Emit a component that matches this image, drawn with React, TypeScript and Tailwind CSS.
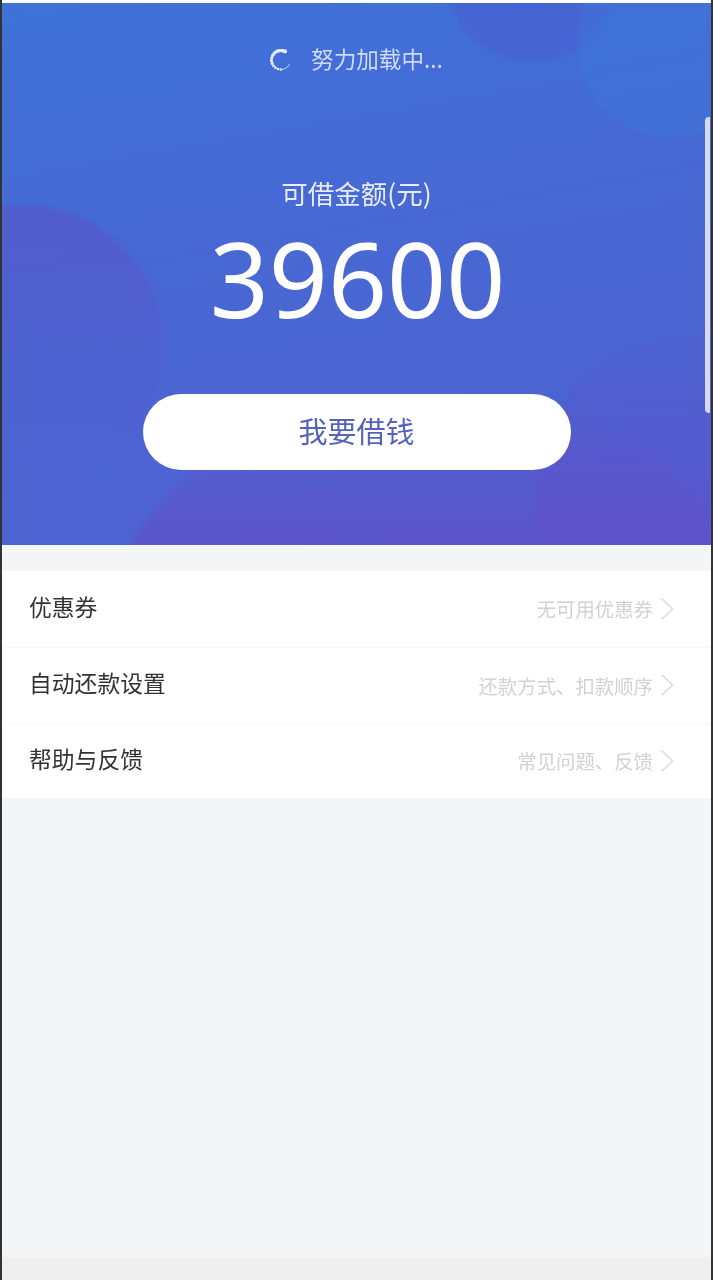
const rows = [
  { title: '优惠券', hint: '无可用优惠券' },
  { title: '自动还款设置', hint: '还款方式、扣款顺序' },
  { title: '帮助与反馈', hint: '常见问题、反馈' },
];

const cjk = "font-['Noto_Sans_CJK_SC',sans-serif]";

function Spinner() {
  // dotted arc from one o'clock round the left to the bottom
  const dots = Array.from({ length: 13 }, (_, i) => {
    const angle = ((-65 - i * 17) * Math.PI) / 180;
    return { x: 11 + 9.5 * Math.cos(angle), y: 11 + 9.5 * Math.sin(angle), r: 2.1 - i * 0.07 };
  });
  return (
    <svg width="22" height="24" viewBox="0 0 22 24" fill="none" className="mt-[3px] shrink-0">
      {dots.map((d, i) => (
        <circle key={i} cx={d.x} cy={d.y} r={d.r} fill="#e6ecfb" />
      ))}
      <path d="M11 20.5a9.5 9.5 0 0 0 8.4-5" stroke="#d3dcf7" strokeWidth="1" strokeLinecap="round" />
    </svg>
  );
}

function HeroShapes() {
  return (
    <svg className="absolute inset-0 h-full w-full blur-[2px]" viewBox="0 0 709 542" preserveAspectRatio="none" fill="none">
      <defs>
        <linearGradient id="leftBlob" x1="0" y1="0" x2="0" y2="1">
          <stop offset="0" stopColor="#5a52c4" stopOpacity="0.6" />
          <stop offset="0.55" stopColor="#5658c8" stopOpacity="0.3" />
          <stop offset="1" stopColor="#5658c8" stopOpacity="0" />
        </linearGradient>
        <linearGradient id="bottomBlob" gradientUnits="userSpaceOnUse" x1="0" y1="400" x2="0" y2="542">
          <stop offset="0" stopColor="#5f52c8" stopOpacity="0" />
          <stop offset="1" stopColor="#6050c8" stopOpacity="0.75" />
        </linearGradient>
        <linearGradient id="rightBlob" x1="0" y1="0" x2="0" y2="1">
          <stop offset="0" stopColor="#5650c8" stopOpacity="0.12" />
          <stop offset="0.7" stopColor="#6450cc" stopOpacity="0.6" />
        </linearGradient>
      </defs>
      <circle cx="530" cy="-30" r="88" fill="#4a5bd0" opacity="0.5" />
      <circle cx="670" cy="40" r="95" fill="#3d7bdc" opacity="0.35" />
      <circle cx="20" cy="345" r="143" fill="url(#leftBlob)" />
      <circle cx="690" cy="490" r="158" fill="url(#rightBlob)" />
      <circle cx="430" cy="730" r="355" fill="url(#bottomBlob)" />
    </svg>
  );
}

export default function App() {
  return (
    <div className={`flex h-[1280px] w-[713px] flex-col overflow-hidden border-x-2 border-x-[#333] bg-[#f4f5f7] blur-[0.4px] ${cjk}`}>
      <div className="h-[3px] shrink-0 bg-white" />
      <div className="relative flex h-[542px] shrink-0 flex-col items-center overflow-hidden bg-[linear-gradient(170deg,#3f72d9,#4868d4_45%,#5060cf)]">
        <HeroShapes />
        <div className="relative mt-[40px] flex h-[32px] items-center text-[22.6px] leading-[32px] text-[#cfdaf6]">
          <Spinner />
          <span className="ml-[19px]">努力加载中...</span>
        </div>
        <p className="relative mt-[100px] text-[26.5px] leading-[36px] text-[#e8ecfa]">可借金额(元)</p>
        <p className="relative mt-[11px] pl-[2px] font-['Noto_Sans',sans-serif] text-[103.4px] leading-[112px] text-white">39600</p>
        <button
          type="button"
          className="relative mt-[60px] h-[76px] w-[428px] rounded-full bg-white pb-[3px] text-[29px] text-[#5562bb]"
        >
          我要借钱
        </button>
        <div className="absolute right-[1px] top-[114px] h-[296px] w-[5px] rounded-l bg-[#d5d9f3]" />
      </div>
      <div className="h-[26px] shrink-0" />
      <div className="shrink-0 bg-white">
        {rows.map((row, i) => (
          <div
            key={row.title}
            className={`flex items-center justify-between pl-[27px] pr-[37px] ${i === 2 ? 'h-[75px]' : 'h-[76px]'} ${i > 0 ? 'border-t border-t-[#f8f8f8]' : ''}`}
          >
            <span className="pb-[4px] text-[22.8px] text-[#333]">{row.title}</span>
            <span className="flex items-center gap-[7px]">
              <span className="text-[19.4px] text-[#d2d2d2]">{row.hint}</span>
              <svg width="14" height="24" viewBox="0 0 14 24" fill="none">
                <path d="M1.5 1.5 12.5 12 1.5 22.5" stroke="#dcdcdc" strokeWidth="1.6" />
              </svg>
            </span>
          </div>
        ))}
      </div>
      <div className="flex-1" />
      <div className="h-[23px] shrink-0 bg-[#efefef]" />
    </div>
  );
}
